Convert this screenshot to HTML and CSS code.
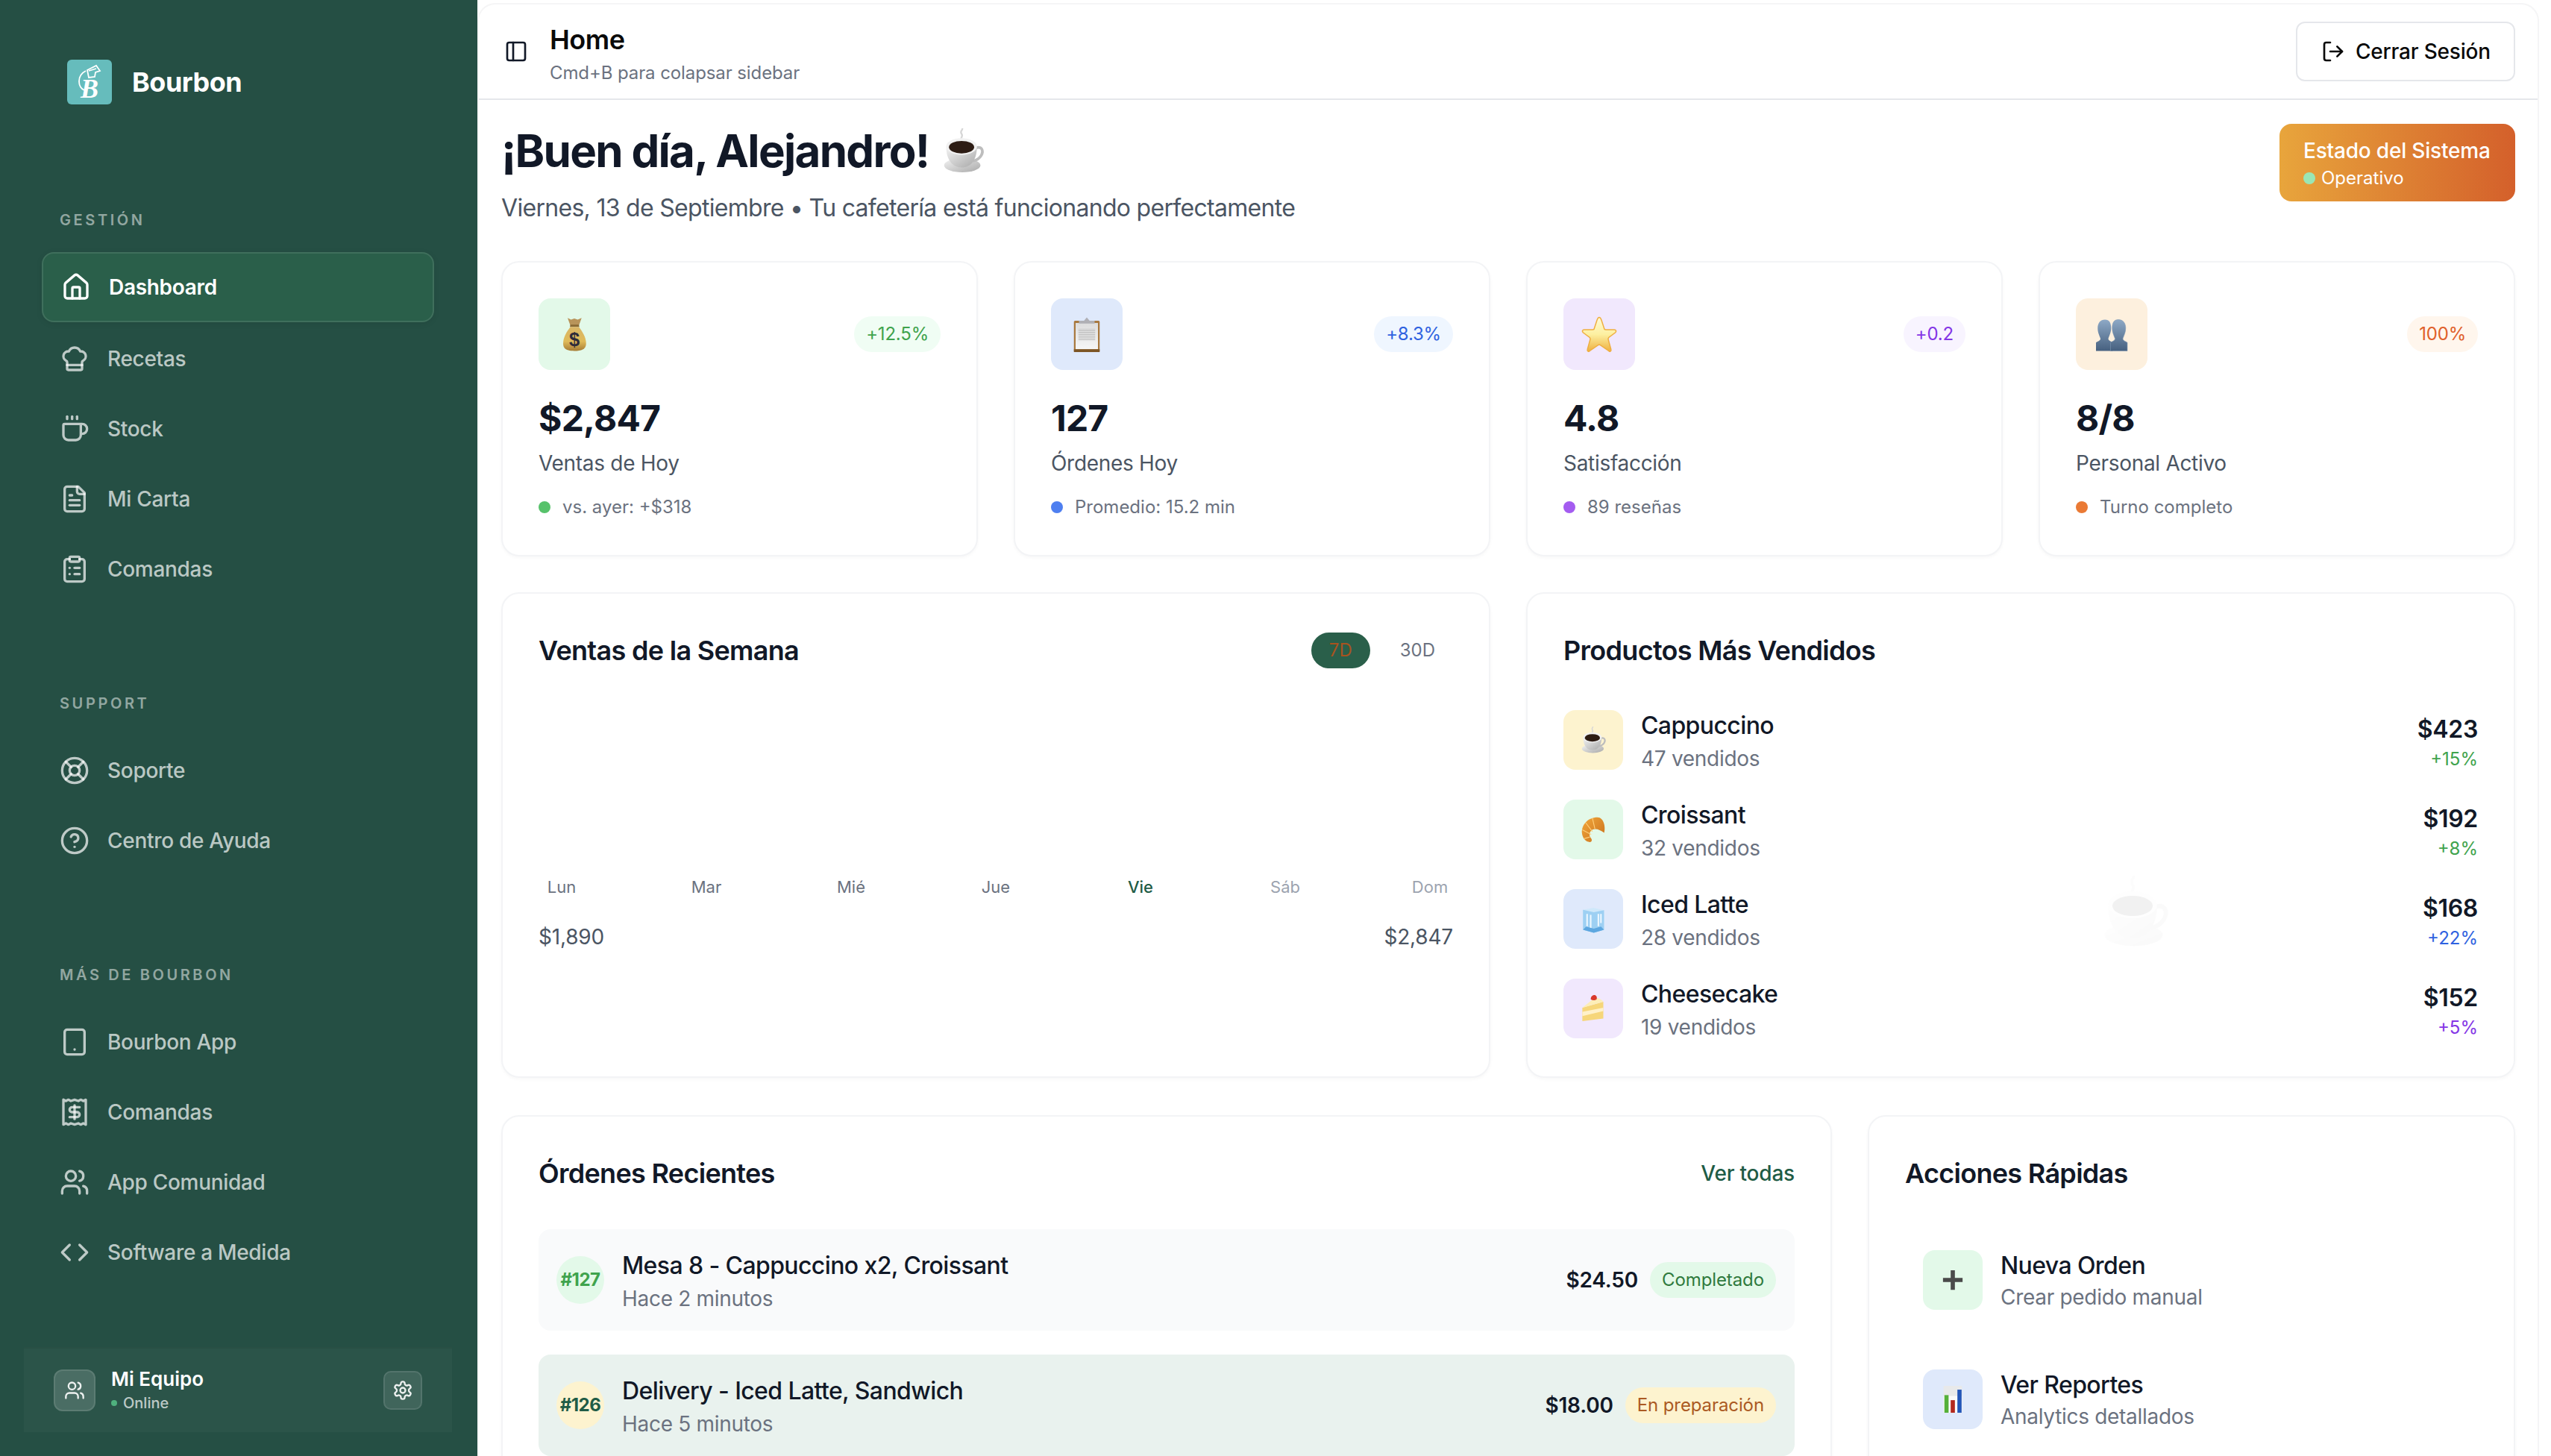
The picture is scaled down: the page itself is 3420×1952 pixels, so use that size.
FILE: index.html
```html
<!DOCTYPE html>
<html lang="es">
<head>
<meta charset="utf-8">
<title>Bourbon</title>
<link rel="stylesheet" href="styles.css">
</head>
<body>
<svg class="defs" width="0" height="0" aria-hidden="true">
  <defs>
    <linearGradient id="gBag" x1="0" y1="0" x2="0" y2="1"><stop offset="0" stop-color="#d9b566"/><stop offset=".6" stop-color="#e0bb5a"/><stop offset="1" stop-color="#a67c35"/></linearGradient>
    <linearGradient id="gStar" x1="0" y1="0" x2="0" y2="1"><stop offset="0" stop-color="#fffbd6"/><stop offset=".5" stop-color="#fdf0a0"/><stop offset="1" stop-color="#eeb040"/></linearGradient>
    <linearGradient id="gBust" x1="0" y1="0" x2="0" y2="1"><stop offset="0" stop-color="#8ea9c6"/><stop offset="1" stop-color="#46607f"/></linearGradient>
    <linearGradient id="gCup" x1="0" y1="0" x2="1" y2="1"><stop offset="0" stop-color="#f4f4f4"/><stop offset="1" stop-color="#a8a8a8"/></linearGradient>
    <linearGradient id="gPaper" x1="0" y1="0" x2="0" y2="1"><stop offset="0" stop-color="#dddddd"/><stop offset="1" stop-color="#f6f6f6"/></linearGradient>
    <linearGradient id="gCroi" x1="0" y1="0" x2="1" y2="1"><stop offset="0" stop-color="#f2a83c"/><stop offset="1" stop-color="#c9701c"/></linearGradient>
    <symbol id="e-coffee" viewBox="0 0 64 64">
      <path d="M30 18c-3-4 3-6 0-10s2-5 1-8" fill="none" stroke="#d6d6d6" stroke-width="2.5"/>
      <ellipse cx="31" cy="53" rx="26" ry="10" fill="url(#gCup)"/>
      <path d="M50 28c9-3 12 4 8 11-3 5-8 7-12 8" fill="none" stroke="#bdbdbd" stroke-width="4"/>
      <path d="M8 26c0 18 8 30 22 30s22-12 22-30z" fill="url(#gCup)"/>
      <ellipse cx="30" cy="26" rx="22" ry="12" fill="#f1f1f1"/>
      <ellipse cx="30" cy="27" rx="18" ry="9" fill="#2d1c14"/>
    </symbol>
    <symbol id="e-bag" viewBox="0 0 64 64">
      <path d="M20 3l6 3 6-2 6 2 7-3-5 14H25z" fill="#b8945a"/>
      <path d="M25 15h15l1 4H24z" fill="#8a6a35"/>
      <path d="M25 19c-6 8-13 18-13 30 0 10 8 13 20 13s21-3 21-13c0-12-7-22-13-30z" fill="url(#gBag)"/>
      <text x="32" y="53" text-anchor="middle" class="e-dollar">$</text>
    </symbol>
    <pattern id="pLines" width="4" height="2" patternUnits="userSpaceOnUse"><rect width="4" height="1" fill="#bdbdbd"/></pattern>
    <symbol id="e-clip" viewBox="0 0 64 64">
      <rect x="9" y="8" width="46" height="56" rx="2" fill="#a9793f"/>
      <rect x="12" y="12" width="40" height="47" fill="url(#gPaper)"/>
      <rect x="17" y="22" width="30" height="22" fill="url(#pLines)"/>
      <path d="M18 13v-5h9l5-6 5 6h9v5z" fill="#b0b0b5"/>
      <rect x="9" y="59" width="46" height="5" fill="#7d5626"/>
    </symbol>
    <symbol id="e-star" viewBox="0 0 64 64">
      <path d="M32 2c2 0 3 2 4 5l5 15c0 1 1 2 3 2h15c3 0 4 3 2 5L49 38c-1 1-1 2-1 3l5 18c1 3-2 5-4 3L33 51h-2L15 62c-2 2-5 0-4-3l5-18c0-1 0-2-1-3L3 29c-2-2-1-5 2-5h15c2 0 3-1 3-2l5-15c1-3 2-5 4-5z" fill="url(#gStar)" stroke="#efae40" stroke-width="2"/>
    </symbol>
    <symbol id="e-bust" viewBox="0 0 64 64">
      <path d="M20 6c8 0 11 6 11 15 0 8-3 13-5 19 0 4 6 5 8 7v15H4V47c2-2 8-3 8-7-2-6-5-11-5-19C7 12 12 6 20 6z" fill="url(#gBust)"/>
      <path d="M44 6c8 0 13 6 13 15 0 8-3 13-5 19 0 4 6 5 8 7v15H30V47c2-2 8-3 8-7-2-6-5-11-5-19 0-9 3-15 11-15z" fill="url(#gBust)" stroke="#7d97b4" stroke-width=".8"/>
    </symbol>
    <symbol id="e-croissant" viewBox="0 0 64 64">
      <path d="M42 3C20 3 4 20 5 40c1 12 9 22 19 22 5 0 6-6 2-10-5-7-3-16 5-20 8-3 18 1 27 8 4-14-1-37-16-37z" fill="url(#gCroi)"/>
      <path d="M30 5l6 26M14 16l16 21M6 33l21 11M10 54l14-4" fill="none" stroke="#ffcf7a" stroke-width="2"/>
    </symbol>
    <symbol id="e-ice" viewBox="0 0 64 64">
      <path d="M12 14l20-4 21 5v38l-20 6-21-6z" fill="#cfe8fa"/>
      <path d="M12 14l21 5 20-4v38l-20 6-21-6z" fill="#9dd0f3"/>
      <path d="M20 22v24M27 24v26M42 22v24M47 22v18" stroke="#eef8ff" stroke-width="3"/>
      <path d="M12 53l21 6 20-6-6-6-14 4-15-4z" fill="#5da7e0"/>
    </symbol>
    <symbol id="e-cake" viewBox="0 0 64 64">
      <path d="M6 30L56 16v40L6 62z" fill="#f6d67a"/>
      <path d="M6 40l50-10v8L6 50z" fill="#fff1c9"/>
      <path d="M6 30L36 6c8 0 18 6 20 10z" fill="#fdeeb8"/>
      <path d="M26 10c0-8 6-10 9-10s7 4 5 10c-4 3-10 3-14 0z" fill="#d9392b"/>
    </symbol>
    <symbol id="e-plus" viewBox="0 0 64 64">
      <path d="M26 4h12v22h22v12H38v22H26V38H4V26h22z" fill="#4a4a4a"/>
    </symbol>
    <symbol id="e-chart" viewBox="0 0 64 64">
      <rect x="10" y="0" width="44" height="64" fill="#e8e9ea"/>
      <rect x="10" y="24" width="44" height="40" fill="#fafafa"/>
      <rect x="12" y="22" width="10" height="42" fill="#55b03a"/>
      <rect x="27" y="34" width="10" height="30" fill="#b3281e"/>
      <rect x="43" y="9" width="10" height="55" fill="#2356b8"/>
    </symbol>
  </defs>
</svg>

<aside class="sidebar">
  <div class="brand">
    <div class="brand-logo">
      <svg class="brand-swirl" viewBox="0 0 60 60" fill="none" stroke="#fff" stroke-width="1.8"><path d="M25 15c-6 3-9 8-9 14 0 6 3 10 7 12"/><path d="M27 14l12-6 5 7-6 2-1 6-8 1z" fill="#66bcbc"/><path d="M29 15l10-3"/></svg>
      <span class="brand-b">B</span>
    </div>
    <span class="brand-name">Bourbon</span>
  </div>

  <nav class="nav-group">
    <div class="nav-label">GESTIÓN</div>
    <a class="nav-item nav-item--active"><svg class="ico" viewBox="0 0 24 24"><path d="M15 21v-8a1 1 0 0 0-1-1h-4a1 1 0 0 0-1 1v8"/><path d="M3 10a2 2 0 0 1 .709-1.528l7-5.999a2 2 0 0 1 2.582 0l7 5.999A2 2 0 0 1 21 10v9a2 2 0 0 1-2 2H5a2 2 0 0 1-2-2z"/></svg><span>Dashboard</span></a>
    <a class="nav-item"><svg class="ico" viewBox="0 0 24 24"><path d="M17 21a1 1 0 0 0 1-1v-5.35c0-.457.316-.844.727-1.041a4 4 0 0 0-2.134-7.589 5 5 0 0 0-9.186 0 4 4 0 0 0-2.134 7.588c.411.198.727.585.727 1.041V20a1 1 0 0 0 1 1Z"/><path d="M6 17h12"/></svg><span>Recetas</span></a>
    <a class="nav-item"><svg class="ico" viewBox="0 0 24 24"><path d="M10 2v2"/><path d="M14 2v2"/><path d="M16 8a1 1 0 0 1 1 1v8a4 4 0 0 1-4 4H7a4 4 0 0 1-4-4V9a1 1 0 0 1 1-1h14a4 4 0 1 1 0 8h-1"/><path d="M6 2v2"/></svg><span>Stock</span></a>
    <a class="nav-item"><svg class="ico" viewBox="0 0 24 24"><path d="M15 2H6a2 2 0 0 0-2 2v16a2 2 0 0 0 2 2h12a2 2 0 0 0 2-2V7Z"/><path d="M14 2v4a2 2 0 0 0 2 2h4"/><path d="M10 9H8"/><path d="M16 13H8"/><path d="M16 17H8"/></svg><span>Mi Carta</span></a>
    <a class="nav-item"><svg class="ico" viewBox="0 0 24 24"><rect width="8" height="4" x="8" y="2" rx="1" ry="1"/><path d="M16 4h2a2 2 0 0 1 2 2v14a2 2 0 0 1-2 2H6a2 2 0 0 1-2-2V6a2 2 0 0 1 2-2h2"/><path d="M12 11h4"/><path d="M12 16h4"/><path d="M8 11h.01"/><path d="M8 16h.01"/></svg><span>Comandas</span></a>
  </nav>

  <nav class="nav-group">
    <div class="nav-label">SUPPORT</div>
    <a class="nav-item"><svg class="ico" viewBox="0 0 24 24"><circle cx="12" cy="12" r="10"/><path d="m4.93 4.93 4.24 4.24"/><path d="m14.83 9.17 4.24-4.24"/><path d="m14.83 14.83 4.24 4.24"/><path d="m9.17 14.83-4.24 4.24"/><circle cx="12" cy="12" r="4"/></svg><span>Soporte</span></a>
    <a class="nav-item"><svg class="ico" viewBox="0 0 24 24"><circle cx="12" cy="12" r="10"/><path d="M9.09 9a3 3 0 0 1 5.83 1c0 2-3 3-3 3"/><path d="M12 17h.01"/></svg><span>Centro de Ayuda</span></a>
  </nav>

  <nav class="nav-group">
    <div class="nav-label">MÁS DE BOURBON</div>
    <a class="nav-item"><svg class="ico" viewBox="0 0 24 24"><rect width="16" height="20" x="4" y="2" rx="2" ry="2"/><path d="M12 18h.01"/></svg><span>Bourbon App</span></a>
    <a class="nav-item"><svg class="ico" viewBox="0 0 24 24"><path d="M3 2v20l2-1 2 1 2-1 3 1 3-1 2 1 2-1 2 1V2l-2 1-2-1-2 1-3-1-3 1-2-1-2 1Z"/><path d="M16 8h-6a2 2 0 1 0 0 4h4a2 2 0 1 1 0 4H8"/><path d="M12 17.5v-11"/></svg><span>Comandas</span></a>
    <a class="nav-item"><svg class="ico" viewBox="0 0 24 24"><path d="M16 21v-2a4 4 0 0 0-4-4H6a4 4 0 0 0-4 4v2"/><circle cx="9" cy="7" r="4"/><path d="M22 21v-2a4 4 0 0 0-3-3.87"/><path d="M16 3.13a4 4 0 0 1 0 7.75"/></svg><span>App Comunidad</span></a>
    <a class="nav-item"><svg class="ico" viewBox="0 0 24 24"><polyline points="16 18 22 12 16 6"/><polyline points="8 6 2 12 8 18"/></svg><span>Software a Medida</span></a>
  </nav>

  <div class="team">
    <div class="team-avatar"><svg class="ico ico--sm" viewBox="0 0 24 24"><path d="M16 21v-2a4 4 0 0 0-4-4H6a4 4 0 0 0-4 4v2"/><circle cx="9" cy="7" r="4"/><path d="M22 21v-2a4 4 0 0 0-3-3.87"/><path d="M16 3.13a4 4 0 0 1 0 7.75"/></svg></div>
    <div class="team-text">
      <div class="team-name">Mi Equipo</div>
      <div class="team-status"><i class="team-dot"></i>Online</div>
    </div>
    <div class="team-gear"><svg class="ico ico--sm" viewBox="0 0 24 24"><path d="M12.22 2h-.44a2 2 0 0 0-2 2v.18a2 2 0 0 1-1 1.73l-.43.25a2 2 0 0 1-2 0l-.15-.08a2 2 0 0 0-2.73.73l-.22.38a2 2 0 0 0 .73 2.73l.15.1a2 2 0 0 1 1 1.72v.51a2 2 0 0 1-1 1.74l-.15.09a2 2 0 0 0-.73 2.73l.22.38a2 2 0 0 0 2.73.73l.15-.08a2 2 0 0 1 2 0l.43.25a2 2 0 0 1 1 1.73V20a2 2 0 0 0 2 2h.44a2 2 0 0 0 2-2v-.18a2 2 0 0 1 1-1.73l.43-.25a2 2 0 0 1 2 0l.15.08a2 2 0 0 0 2.73-.73l.22-.39a2 2 0 0 0-.73-2.73l-.15-.08a2 2 0 0 1-1-1.74v-.5a2 2 0 0 1 1-1.74l.15-.09a2 2 0 0 0 .73-2.73l-.22-.38a2 2 0 0 0-2.73-.73l-.15.08a2 2 0 0 1-2 0l-.43-.25a2 2 0 0 1-1-1.73V4a2 2 0 0 0-2-2z"/><circle cx="12" cy="12" r="3"/></svg></div>
  </div>
</aside>

<main class="main">
  <header class="topbar">
    <svg class="ico ico--panel" viewBox="0 0 24 24"><rect width="18" height="18" x="3" y="3" rx="2"/><path d="M9 3v18"/></svg>
    <div class="topbar-text">
      <div class="topbar-title">Home</div>
      <div class="topbar-sub">Cmd+B para colapsar sidebar</div>
    </div>
    <button class="logout"><svg class="ico ico--logout" viewBox="0 0 24 24"><path d="M9 21H5a2 2 0 0 1-2-2V5a2 2 0 0 1 2-2h4"/><polyline points="16 17 21 12 16 7"/><line x1="21" x2="9" y1="12" y2="12"/></svg>Cerrar Sesión</button>
  </header>

  <div class="content">
    <section class="welcome">
      <div>
        <h1 class="welcome-title">¡Buen día, Alejandro! <svg class="emoji emoji--h1"><use href="#e-coffee"/></svg></h1>
        <p class="welcome-sub">Viernes, 13 de Septiembre • Tu cafetería está funcionando perfectamente</p>
      </div>
      <div class="status">
        <div class="status-title">Estado del Sistema</div>
        <div class="status-line"><i class="status-dot"></i>Operativo</div>
      </div>
    </section>

    <section class="stats">
      <article class="card stat">
        <div class="stat-top"><div class="tile tile--96 bg-green"><svg class="emoji emoji--48"><use href="#e-bag"/></svg></div><span class="pill pill--green">+12.5%</span></div>
        <div class="stat-value">$2,847</div>
        <div class="stat-label">Ventas de Hoy</div>
        <div class="stat-meta"><i class="dot dot--green"></i>vs. ayer: +$318</div>
      </article>
      <article class="card stat">
        <div class="stat-top"><div class="tile tile--96 bg-blue"><svg class="emoji emoji--48"><use href="#e-clip"/></svg></div><span class="pill pill--blue">+8.3%</span></div>
        <div class="stat-value">127</div>
        <div class="stat-label">Órdenes Hoy</div>
        <div class="stat-meta"><i class="dot dot--blue"></i>Promedio: 15.2 min</div>
      </article>
      <article class="card stat">
        <div class="stat-top"><div class="tile tile--96 bg-purple"><svg class="emoji emoji--48"><use href="#e-star"/></svg></div><span class="pill pill--purple">+0.2</span></div>
        <div class="stat-value">4.8</div>
        <div class="stat-label">Satisfacción</div>
        <div class="stat-meta"><i class="dot dot--purple"></i>89 reseñas</div>
      </article>
      <article class="card stat">
        <div class="stat-top"><div class="tile tile--96 bg-orange"><svg class="emoji emoji--48"><use href="#e-bust"/></svg></div><span class="pill pill--orange">100%</span></div>
        <div class="stat-value">8/8</div>
        <div class="stat-label">Personal Activo</div>
        <div class="stat-meta"><i class="dot dot--orange"></i>Turno completo</div>
      </article>
    </section>

    <section class="row-two">
      <article class="card panel panel--tall">
        <div class="panel-head">
          <h2 class="panel-title">Ventas de la Semana</h2>
          <div class="toggle"><span class="toggle-btn toggle-btn--on">7D</span><span class="toggle-btn">30D</span></div>
        </div>
        <div class="chart"></div>
        <div class="days">
          <span class="day">Lun</span><span class="day">Mar</span><span class="day">Mié</span><span class="day">Jue</span><span class="day day--now">Vie</span><span class="day day--muted">Sáb</span><span class="day day--muted">Dom</span>
        </div>
        <div class="totals"><span>$1,890</span><span>$2,847</span></div>
      </article>

      <article class="card panel panel--tall">
        <div class="panel-head"><h2 class="panel-title">Productos Más Vendidos</h2></div>
        <div class="products">
          <div class="product"><div class="tile tile--80 bg-yellow"><svg class="emoji emoji--36"><use href="#e-coffee"/></svg></div><div class="product-text"><div class="name">Cappuccino</div><div class="sub">47 vendidos</div></div><div class="product-nums"><div class="price">$423</div><div class="delta t-green">+15%</div></div></div>
          <div class="product"><div class="tile tile--80 bg-green"><svg class="emoji emoji--36"><use href="#e-croissant"/></svg></div><div class="product-text"><div class="name">Croissant</div><div class="sub">32 vendidos</div></div><div class="product-nums"><div class="price">$192</div><div class="delta t-green">+8%</div></div></div>
          <div class="product"><div class="tile tile--80 bg-blue"><svg class="emoji emoji--44"><use href="#e-ice"/></svg></div><div class="product-text"><div class="name">Iced Latte</div><div class="sub">28 vendidos</div></div><div class="product-nums"><div class="price">$168</div><div class="delta t-blue">+22%</div></div></div>
          <div class="product"><div class="tile tile--80 bg-purple"><svg class="emoji emoji--36"><use href="#e-cake"/></svg></div><div class="product-text"><div class="name">Cheesecake</div><div class="sub">19 vendidos</div></div><div class="product-nums"><div class="price">$152</div><div class="delta t-purple">+5%</div></div></div>
        </div>
      </article>
    </section>

    <section class="row-three">
      <article class="card panel">
        <div class="panel-head"><h2 class="panel-title">Órdenes Recientes</h2><a class="panel-link">Ver todas</a></div>
        <div class="orders">
          <div class="order"><div class="order-num num--green">#127</div><div class="order-text"><div class="name">Mesa 8 - Cappuccino x2, Croissant</div><div class="sub">Hace 2 minutos</div></div><div class="order-price">$24.50</div><span class="badge badge--done">Completado</span></div>
          <div class="order order--active"><div class="order-num num--yellow">#126</div><div class="order-text"><div class="name">Delivery - Iced Latte, Sandwich</div><div class="sub">Hace 5 minutos</div></div><div class="order-price">$18.00</div><span class="badge badge--prep">En preparación</span></div>
        </div>
      </article>
      <article class="card panel">
        <div class="panel-head"><h2 class="panel-title">Acciones Rápidas</h2></div>
        <div class="actions">
          <div class="action"><div class="tile tile--80 bg-green"><svg class="emoji emoji--30"><use href="#e-plus"/></svg></div><div class="action-text"><div class="name">Nueva Orden</div><div class="sub">Crear pedido manual</div></div></div>
          <div class="action"><div class="tile tile--80 bg-blue"><svg class="emoji emoji--36"><use href="#e-chart"/></svg></div><div class="action-text"><div class="name">Ver Reportes</div><div class="sub">Analytics detallados</div></div></div>
        </div>
      </article>
    </section>
  </div>

  <svg class="watermark"><use href="#e-coffee"/></svg>
</main>
</body>
</html>
```
FILE: styles.css
```css
* { box-sizing: border-box; }
html, body { margin: 0; height: 100%; }
body {
  display: flex;
  width: 3420px;
  height: 1952px;
  overflow: hidden;
  background: #fff;
  font-family: Inter, "Liberation Sans", sans-serif;
  color: #111827;
}
.defs { position: absolute; }
.e-dollar { font: 700 34px "Liberation Sans", sans-serif; fill: #2f2c3a; }
h1, h2, p { margin: 0; font-weight: inherit; }

/* Sidebar */
.sidebar {
  width: 640px;
  flex: none;
  display: flex;
  flex-direction: column;
  background: #254f44;
  color: #fff;
}
.brand {
  display: flex;
  align-items: center;
  gap: 27px;
  height: 60px;
  margin: 80px 0 141px;
  padding-left: 90px;
}
.brand-logo {
  position: relative;
  width: 60px;
  height: 60px;
  border-radius: 6px;
  background: #66bcbc;
  display: flex;
  align-items: center;
  justify-content: center;
}
.brand-swirl { position: absolute; inset: 0; width: 60px; height: 60px; }
.brand-b {
  position: relative;
  top: 9px;
  font: italic 700 36px/1 "Liberation Serif", serif;
  color: #fff;
}
.brand-name { font-size: 36px; font-weight: 700; letter-spacing: -.5px; }

.nav-group + .nav-group { margin-top: 119px; }
.nav-label {
  height: 28px;
  margin: 0 0 29px 80px;
  font-size: 20px;
  line-height: 28px;
  font-weight: 600;
  letter-spacing: 3.6px;
  color: rgba(255, 255, 255, .5);
}
.nav-item {
  display: flex;
  align-items: center;
  gap: 24px;
  height: 94px;
  margin: 0 58px 0 56px;
  padding-left: 24px;
  border-radius: 16px;
  font-size: 28px;
  font-weight: 500;
  letter-spacing: -.3px;
  color: rgba(255, 255, 255, .7);
}
.nav-item--active {
  margin-top: 2px;
  margin-bottom: 2px;
  background: #2a5f4a;
  border: 2px solid rgba(255, 255, 255, .1);
  box-shadow: 0 2px 8px rgba(0, 0, 0, .08);
  color: #fff;
  font-weight: 600;
}
.ico {
  width: 40px;
  height: 40px;
  flex: none;
  fill: none;
  stroke: currentColor;
  stroke-width: 2;
  stroke-linecap: round;
  stroke-linejoin: round;
}
.ico--sm { width: 28px; height: 28px; }
.ico--panel { width: 32px; height: 32px; color: #111827; margin-left: 4px; }
.ico--logout { width: 32px; height: 32px; }

.team {
  display: flex;
  align-items: center;
  margin: auto 34px 32px 32px;
  height: 114px;
  padding: 0 40px;
  background: rgba(255, 255, 255, .03);
  border-top: 2px solid rgba(0, 0, 0, .06);
}
.team-avatar {
  width: 56px;
  height: 56px;
  flex: none;
  display: flex;
  align-items: center;
  justify-content: center;
  border-radius: 12px;
  background: rgba(255, 255, 255, .15);
  border: 2px solid rgba(255, 255, 255, .1);
  color: rgba(255, 255, 255, .9);
}
.team-text { flex: 1; margin-left: 21px; }
.team-name { font-size: 26px; line-height: 32px; font-weight: 600; }
.team-status {
  display: flex;
  align-items: center;
  gap: 8px;
  margin-top: 2px;
  font-size: 20px;
  line-height: 28px;
  font-weight: 500;
  color: rgba(255, 255, 255, .7);
}
.team-dot { width: 8px; height: 8px; border-radius: 50%; background: #4fb17e; }
.team-gear {
  width: 52px;
  height: 52px;
  flex: none;
  display: flex;
  align-items: center;
  justify-content: center;
  border-radius: 10px;
  background: rgba(255, 255, 255, .1);
  border: 2px solid rgba(255, 255, 255, .1);
  color: rgba(255, 255, 255, .9);
}

/* Main */
.main {
  position: relative;
  flex: 1;
  margin: 4px 16px 0 0;
  background: #fff;
  border: 2px solid #f5f5f6;
  border-bottom: 0;
  border-radius: 24px 24px 0 0;
  overflow: hidden;
}
.topbar {
  display: flex;
  align-items: center;
  height: 128px;
  padding: 0 30px;
  border-bottom: 2px solid #e5e7eb;
}
.topbar-text { flex: 1; margin-left: 29px; padding-top: 7px; }
.topbar-title { font-size: 36px; line-height: 44px; font-weight: 600; letter-spacing: -.5px; color: #0a0a0a; }
.topbar-sub { margin-top: 7px; font-size: 24px; line-height: 32px; letter-spacing: -.1px; color: #6b7280; }
.logout {
  display: flex;
  align-items: center;
  gap: 14px;
  width: 294px;
  height: 80px;
  padding: 0 32px;
  background: #fff;
  border: 2px solid #e5e7eb;
  border-radius: 12px;
  font: 500 28px Inter, sans-serif;
  letter-spacing: -.2px;
  white-space: nowrap;
  color: #0a0a0a;
}
.content { padding: 32px 30px 0; }

.welcome { display: flex; justify-content: space-between; align-items: flex-start; margin-bottom: 51px; }
.welcome-title {
  display: flex;
  align-items: center;
  gap: 16px;
  font-size: 60px;
  line-height: 72px;
  font-weight: 700;
  letter-spacing: -1.7px;
}
.welcome-sub { margin-top: 21px; font-size: 32px; line-height: 40px; letter-spacing: -.7px; color: #4b5563; }
.emoji { display: block; flex: none; }
.emoji--h1 { width: 60px; height: 60px; }
.emoji--48 { width: 48px; height: 48px; }
.emoji--44 { width: 44px; height: 44px; }
.emoji--36 { width: 36px; height: 36px; }
.emoji--30 { width: 30px; height: 30px; }

.status {
  width: 316px;
  height: 104px;
  padding: 18px 32px;
  border-radius: 16px;
  background: linear-gradient(90deg, #e8a53c, #d4602b);
  color: #fff;
  white-space: nowrap;
}
.status-title { font-size: 28px; line-height: 36px; font-weight: 500; letter-spacing: -.2px; }
.status-line { display: flex; align-items: center; gap: 8px; margin-top: 3px; font-size: 24px; line-height: 32px; }
.status-dot { width: 16px; height: 16px; border-radius: 50%; background: #9ae6b4; }

.card {
  background: #fff;
  border: 2px solid #f3f4f6;
  border-radius: 24px;
  box-shadow: 0 2px 4px rgba(0, 0, 0, .03);
}
.stats { display: grid; grid-template-columns: repeat(4, 1fr); gap: 48px; margin-bottom: 48px; }
.stat { padding: 48px; }
.stat-top { display: flex; justify-content: space-between; align-items: center; }
.tile {
  display: flex;
  align-items: center;
  justify-content: center;
  flex: none;
  border-radius: 16px;
}
.tile--96 { width: 96px; height: 96px; }
.tile--80 { width: 80px; height: 80px; }
.bg-green { background: #e3f9e9; }
.bg-blue { background: #dfe9fb; }
.bg-purple { background: #f1e8fd; }
.bg-orange { background: #fdf0de; }
.bg-yellow { background: #fdf3cf; }
.pill {
  height: 48px;
  padding: 0 16px;
  border-radius: 24px;
  font-size: 24px;
  line-height: 48px;
  font-weight: 400;
  letter-spacing: -.2px;
}
.pill--green { background: #f0fdf4; color: #3fa34d; }
.pill--blue { background: #eff6ff; color: #2f62e0; }
.pill--purple { background: #f8f4ff; color: #8436e6; }
.pill--orange { background: #fff6ed; color: #e0602a; }
.stat-value { margin-top: 37px; font-size: 48px; line-height: 56px; font-weight: 700; letter-spacing: -.8px; }
.stat-label { margin-top: 12px; font-size: 28px; line-height: 40px; letter-spacing: -.3px; color: #4b5563; }
.stat-meta { display: flex; align-items: center; gap: 16px; margin-top: 23px; font-size: 24px; line-height: 32px; color: #6b7280; }
.dot { width: 16px; height: 16px; border-radius: 50%; }
.dot--green { background: #57c26b; }
.dot--blue { background: #4e7ff0; }
.dot--purple { background: #a45cf0; }
.dot--orange { background: #ea7a35; }

.row-two { display: grid; grid-template-columns: 1fr 1fr; gap: 48px; margin-bottom: 50px; }
.panel { padding: 48px; }
.panel--tall { height: 651px; }
.panel-head { display: flex; justify-content: space-between; align-items: center; height: 56px; }
.panel-title { font-size: 36px; line-height: 56px; font-weight: 600; letter-spacing: -.7px; }
.panel-link { font-size: 28px; font-weight: 500; letter-spacing: -.2px; color: #1f5c46; }
.toggle { display: flex; gap: 16px; }
.toggle-btn {
  height: 48px;
  padding: 0 24px;
  border-radius: 24px;
  font-size: 24px;
  line-height: 48px;
  font-weight: 400;
  color: #6b7280;
}
.toggle-btn--on { background: #2a5f4a; color: #a8531f; }
.chart { height: 273px; }
.days { display: flex; justify-content: space-between; }
.day { width: 62px; text-align: center; font-size: 22px; line-height: 32px; color: #6b7280; }
.day--now { color: #1f5c46; font-weight: 500; }
.day--muted { color: #9ca3af; }
.totals { display: flex; justify-content: space-between; margin-top: 31px; font-size: 28px; line-height: 40px; letter-spacing: -.2px; color: #4b5563; }

.products { display: flex; flex-direction: column; gap: 40px; margin-top: 52px; }
.product { display: flex; align-items: center; height: 80px; }
.product-text { flex: 1; margin-left: 24px; padding-top: 4px; }
.name { font-size: 32px; line-height: 40px; font-weight: 500; letter-spacing: -.6px; }
.sub { margin-top: 6px; font-size: 28px; line-height: 36px; letter-spacing: -.3px; color: #6b7280; }
.product-nums { text-align: right; padding-top: 7px; }
.price { font-size: 32px; line-height: 40px; font-weight: 600; letter-spacing: -.3px; }
.delta { margin-top: 4px; font-size: 24px; line-height: 32px; }
.t-green { color: #3fa34d; }
.t-blue { color: #2f62e0; }
.t-purple { color: #8436e6; }

.row-three { display: grid; grid-template-columns: 1fr 868px; gap: 48px; }
.orders { display: flex; flex-direction: column; gap: 32px; margin-top: 47px; }
.order {
  display: flex;
  align-items: center;
  height: 136px;
  padding: 0 25px 0 24px;
  border-radius: 16px;
  background: #f9fafb;
}
.order--active { background: #e9f2ee; }
.order-num {
  width: 64px;
  height: 64px;
  flex: none;
  border-radius: 50%;
  font-size: 24px;
  line-height: 64px;
  font-weight: 700;
  text-align: center;
  white-space: nowrap;
  letter-spacing: -.5px;
}
.num--green { background: #e3f9e9; color: #3fa34d; }
.num--yellow { background: #fdf3cf; color: #1f5c46; }
.order-text { flex: 1; margin-left: 24px; padding-top: 4px; }
.order-price { font-size: 28px; font-weight: 600; letter-spacing: -.2px; margin-right: 16px; }
.badge {
  height: 48px;
  padding: 0 16px;
  border-radius: 24px;
  font-size: 24px;
  line-height: 48px;
  letter-spacing: -.1px;
}
.badge--done { background: #e3f9e9; color: #2f7a3d; }
.badge--prep { background: #fdf3cf; color: #ab5a23; }

.actions { display: flex; flex-direction: column; gap: 32px; margin-top: 51px; }
.action { display: flex; align-items: center; gap: 24px; height: 128px; padding: 0 24px; }
.action-text { padding-top: 2px; }
.action-text .sub { margin-top: 4px; }

.watermark {
  position: absolute;
  left: 2172px;
  top: 1168px;
  width: 96px;
  height: 96px;
  opacity: .06;
  filter: grayscale(1);
}
```
